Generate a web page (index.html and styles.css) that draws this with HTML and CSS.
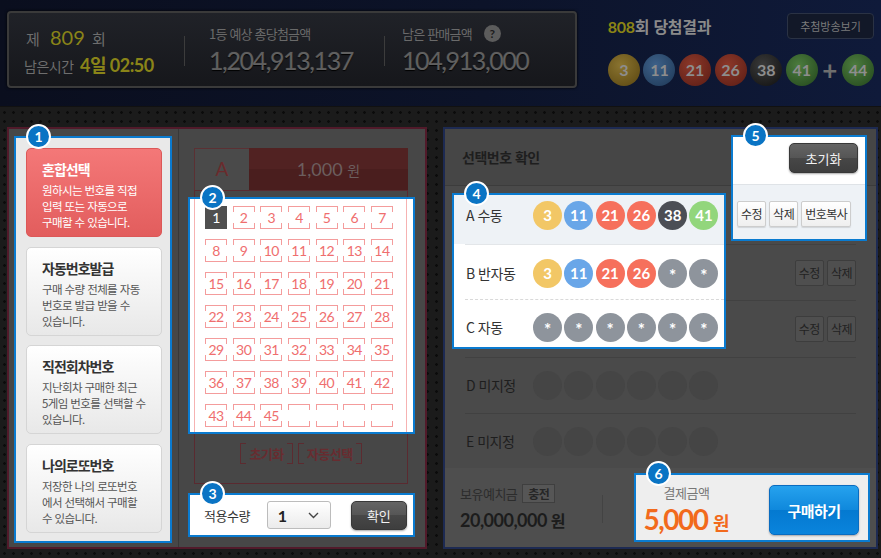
FILE: index.html
```html
<!DOCTYPE html>
<html lang="ko">
<head>
    <meta charset="UTF-8">
    <title>로또 6/45 구매</title>
    <link rel="stylesheet" href="styles.css">
</head>
<body>
    <div id="header">
        <div class="round-info">
            <div class="round-col">
                <div class="round-no">제 <b>809</b> 회</div>
                <div class="remain-time">남은시간 <b>4일 02:50</b></div>
            </div>
            <span class="info-divider"></span>
            <div class="money-col first">
                <div class="money-label">1등 예상 총당첨금액</div>
                <div class="money-num">1,204,913,137</div>
            </div>
            <span class="info-divider"></span>
            <div class="money-col second">
                <div class="money-label">남은 판매금액 <span class="help">?</span></div>
                <div class="money-num">104,913,000</div>
            </div>
        </div>
        <div class="last-result">
            <div class="result-head">
                <h2><em>808</em>회 당첨결과</h2>
                <a href="#" class="btn-broadcast">추첨방송보기</a>
            </div>
            <div class="result-balls">
                <span class="win-ball yellow">3</span>
                <span class="win-ball blue">11</span>
                <span class="win-ball red">21</span>
                <span class="win-ball red">26</span>
                <span class="win-ball black">38</span>
                <span class="win-ball green">41</span>
                <span class="plus">+</span>
                <span class="win-ball green">44</span>
            </div>
        </div>
    </div>

    <div id="main">
        <div class="buy-panel">
            <div class="type-col">
                <div class="hl type-list">
                    <span class="badge">1</span>
                    <div class="type-card active">
                        <h3>혼합선택</h3>
                        <p>원하시는 번호를 직접<br>입력 또는 자동으로<br>구매할 수 있습니다.</p>
                    </div>
                    <div class="type-card">
                        <h3>자동번호발급</h3>
                        <p>구매 수량 전체를 자동<br>번호로 발급 받을 수<br>있습니다.</p>
                    </div>
                    <div class="type-card">
                        <h3>직전회차번호</h3>
                        <p>지난회차 구매한 최근<br>5게임 번호를 선택할 수<br>있습니다.</p>
                    </div>
                    <div class="type-card">
                        <h3>나의로또번호</h3>
                        <p>저장한 나의 로또번호<br>에서 선택해서 구매할<br>수 있습니다.</p>
                    </div>
                </div>
            </div>

            <div class="ticket-col">
                <div class="ticket-head">
                    <span class="ticket-name">A</span>
                    <span class="ticket-price">1,000 <small>원</small></span>
                </div>
                <div class="ticket-body">
                    <div class="hl num-box">
                        <span class="badge">2</span>
                        <div class="num-grid">
                            <span class="num on">1</span><span class="num">2</span><span class="num">3</span><span class="num">4</span><span class="num">5</span><span class="num">6</span><span class="num">7</span>
                            <span class="num">8</span><span class="num">9</span><span class="num">10</span><span class="num">11</span><span class="num">12</span><span class="num">13</span><span class="num">14</span>
                            <span class="num">15</span><span class="num">16</span><span class="num">17</span><span class="num">18</span><span class="num">19</span><span class="num">20</span><span class="num">21</span>
                            <span class="num">22</span><span class="num">23</span><span class="num">24</span><span class="num">25</span><span class="num">26</span><span class="num">27</span><span class="num">28</span>
                            <span class="num">29</span><span class="num">30</span><span class="num">31</span><span class="num">32</span><span class="num">33</span><span class="num">34</span><span class="num">35</span>
                            <span class="num">36</span><span class="num">37</span><span class="num">38</span><span class="num">39</span><span class="num">40</span><span class="num">41</span><span class="num">42</span>
                            <span class="num">43</span><span class="num">44</span><span class="num">45</span><span class="num"></span><span class="num"></span><span class="num"></span><span class="num"></span>
                        </div>
                    </div>
                    <div class="ticket-btns">
                        <span class="bracket-btn">초기화</span>
                        <span class="bracket-btn">자동선택</span>
                    </div>
                </div>
                <div class="hl qty-box">
                    <span class="badge">3</span>
                    <span class="qty-label">적용수량</span>
                    <div class="qty-select">
                        1
                        <svg width="11" height="7" viewBox="0 0 11 7"><polyline points="1,1 5.5,5.5 10,1" fill="none" stroke="#444" stroke-width="1.4"/></svg>
                    </div>
                    <button class="btn-dark btn-ok">확인</button>
                </div>
            </div>
        </div>

        <div class="confirm-panel">
            <div class="confirm-head">선택번호 확인</div>

            <div class="pick-row row-b">
                <div class="row-btns"><span class="dim-btn">수정</span><span class="dim-btn">삭제</span></div>
            </div>
            <div class="pick-row row-c">
                <div class="row-btns"><span class="dim-btn">수정</span><span class="dim-btn">삭제</span></div>
            </div>
            <div class="pick-row row-d">
                <span class="row-label">D 미지정</span>
                <div class="balls">
                    <span class="ball empty"></span><span class="ball empty"></span><span class="ball empty"></span><span class="ball empty"></span><span class="ball empty"></span><span class="ball empty"></span>
                </div>
            </div>
            <div class="pick-row row-e">
                <span class="row-label">E 미지정</span>
                <div class="balls">
                    <span class="ball empty"></span><span class="ball empty"></span><span class="ball empty"></span><span class="ball empty"></span><span class="ball empty"></span><span class="ball empty"></span>
                </div>
            </div>

            <div class="hl pick-box">
                <span class="badge">4</span>
                <div class="pick-line line-a">
                    <span class="row-label">A 수동</span>
                    <div class="balls">
                        <span class="ball yellow">3</span><span class="ball blue">11</span><span class="ball red">21</span><span class="ball red">26</span><span class="ball dark">38</span><span class="ball green">41</span>
                    </div>
                </div>
                <div class="pick-line line-b">
                    <span class="row-label">B 반자동</span>
                    <div class="balls">
                        <span class="ball yellow">3</span><span class="ball blue">11</span><span class="ball red">21</span><span class="ball red">26</span><span class="ball gray">*</span><span class="ball gray">*</span>
                    </div>
                </div>
                <div class="pick-line line-c">
                    <span class="row-label">C 자동</span>
                    <div class="balls">
                        <span class="ball gray">*</span><span class="ball gray">*</span><span class="ball gray">*</span><span class="ball gray">*</span><span class="ball gray">*</span><span class="ball gray">*</span>
                    </div>
                </div>
            </div>

            <div class="hl tool-box">
                <span class="badge">5</span>
                <div class="tool-top">
                    <button class="btn-dark btn-reset">초기화</button>
                </div>
                <div class="tool-bottom">
                    <span class="light-btn">수정</span>
                    <span class="light-btn">삭제</span>
                    <span class="light-btn">번호복사</span>
                </div>
            </div>

            <div class="pay-bar">
                <div class="deposit">
                    <div class="deposit-top">보유예치금 <span class="charge-btn">충전</span></div>
                    <div class="deposit-amt">20,000,000 <small>원</small></div>
                </div>
                <span class="pay-divider"></span>
                <div class="hl pay-box">
                    <span class="badge">6</span>
                    <div class="pay-sum">
                        <div class="pay-label">결제금액</div>
                        <div class="pay-amt">5,000 <small>원</small></div>
                    </div>
                    <button class="btn-buy">구매하기</button>
                </div>
            </div>
        </div>
    </div>
</body>
</html>
```

FILE: styles.css
```css
* {
    box-sizing: border-box;
}
body {
    margin: 0;
    width: 881px;
    height: 558px;
    overflow: hidden;
    background: #1b1b1b radial-gradient(circle, #0b0b0b 1px, transparent 1.6px) 0 0 / 9px 9px;
    font-family: "Noto Sans CJK KR", sans-serif;
    color: #333;
}

/* header */
#header {
    height: 107px;
    padding: 11px 7px 0;
    display: flex;
    background: linear-gradient(90deg, #0a0e1e 0%, #0c1329 55%, #0f1a3a 100%);
    border-bottom: 1px solid #111;
}
.round-info {
    width: 570px;
    height: 77px;
    display: flex;
    align-items: center;
    padding-left: 15px;
    border: 2px solid #3a3a3a;
    border-radius: 4px;
    background: linear-gradient(#202228, #16171b);
    box-shadow: 0 0 3px #000;
}
.round-col {
    width: 160px;
    padding-top: 5px;
    color: #6e6e6e;
}
.round-no {
    font-size: 15px;
    line-height: 24px;
    padding-left: 2px;
}
.round-no b {
    font-family: Lato, sans-serif;
    font-weight: normal;
    font-size: 20px;
    color: #8a8418;
    margin: 0 3px 0 6px;
}
.remain-time {
    font-size: 14px;
    line-height: 28px;
    letter-spacing: -0.5px;
}
.remain-time b {
    font-family: Lato, "Noto Sans CJK KR", sans-serif;
    font-size: 18px;
    color: #8a8418;
    margin-left: 3px;
}
.info-divider {
    width: 1px;
    height: 30px;
    background: #3c3c3c;
    margin-top: 2px;
}
.money-col.first {
    width: 199px;
    padding-left: 24px;
}
.money-col.second {
    padding-left: 17px;
}
.money-label {
    font-size: 13px;
    line-height: 18px;
    letter-spacing: -0.8px;
    color: #6a6a6a;
    display: flex;
    align-items: center;
}
.help {
    display: inline-block;
    width: 17px;
    height: 17px;
    border-radius: 50%;
    background: #5c5c5c;
    color: #1c1c1c;
    font: bold 12px/17px Lato, sans-serif;
    text-align: center;
    margin-left: 12px;
    letter-spacing: 0;
}
.money-num {
    margin-top: 2px;
    font-family: Lato, sans-serif;
    font-size: 25px;
    line-height: 30px;
    letter-spacing: -1.4px;
    color: #606060;
    text-shadow: 0 1px 1px #000, 0 0 1px #555;
}
.last-result {
    flex: 1;
    margin-left: 31px;
}
.result-head {
    height: 26px;
    margin-top: 2px;
    display: flex;
    align-items: center;
    justify-content: space-between;
}
.result-head h2 {
    margin: 0;
    font-size: 16px;
    color: #8a8a8a;
    letter-spacing: -0.3px;
}
.result-head em {
    font-style: normal;
    font-family: Lato, sans-serif;
    color: #8c8515;
}
.btn-broadcast {
    width: 87px;
    height: 26px;
    display: flex;
    align-items: center;
    justify-content: center;
    border: 1px solid #2a3244;
    border-radius: 4px;
    background: #121828;
    color: #7b7b7b;
    font-size: 11px;
    text-decoration: none;
}
.result-balls {
    display: flex;
    align-items: center;
    gap: 3.6px;
    margin-top: 15px;
}
.win-ball {
    width: 32px;
    height: 32px;
    border-radius: 50%;
    font: bold 16px/32px Lato, sans-serif;
    color: #8d8d8d;
    text-align: center;
}
.win-ball.yellow { background: radial-gradient(circle at 40% 35%, #8a7430, #5a4610); }
.win-ball.blue { background: radial-gradient(circle at 40% 35%, #3e6189, #1d3755); }
.win-ball.red { background: radial-gradient(circle at 40% 35%, #8c3829, #5a1c14); }
.win-ball.black { background: radial-gradient(circle at 40% 35%, #3a3a3a, #0f0f0f); }
.win-ball.green { background: radial-gradient(circle at 40% 35%, #4c7c3e, #22461b); }
.plus {
    width: 17px;
    text-align: center;
    font: bold 26px/32px Lato, sans-serif;
    color: #6e6e6e;
}

/* main */
#main {
    display: flex;
    gap: 16px;
    padding: 20px 0 0 7px;
}
.hl {
    position: relative;
    border: 2px solid #0a7bd0;
}
.badge {
    position: absolute;
    left: 10px;
    top: -14px;
    width: 25px;
    height: 25px;
    border-radius: 50%;
    border: 2px solid #fff;
    background: #0a74c4;
    color: #fff;
    font: bold 14px/21px Lato, sans-serif;
    text-align: center;
    z-index: 2;
}

.buy-panel {
    width: 420px;
    height: 422px;
    border: 2px solid #511a2a;
    background: #474747;
    display: flex;
}
.type-col {
    width: 170px;
    padding: 7px 6px 4px 5px;
    border-right: 1px solid #383838;
    display: flex;
}
.type-list {
    flex: 1;
    background: #e9e9e9;
    padding: 10px 8px 0 10px;
    display: flex;
    flex-direction: column;
    gap: 9.5px;
}
.type-card {
    height: 89px;
    border: 1px solid #d5d5d5;
    border-radius: 5px;
    background: linear-gradient(#fff, #e8e8e8);
    padding: 10px 2px 0 15px;
}
.type-card h3 {
    margin: 0;
    font-size: 14px;
    line-height: 20px;
    letter-spacing: -1px;
    color: #333;
}
.type-card p {
    margin: 3px 0 0;
    font-size: 11.5px;
    line-height: 16px;
    letter-spacing: -0.6px;
    color: #555;
    white-space: nowrap;
}
.type-card.active {
    background: linear-gradient(#f47878, #e25d5d);
    border-color: #dc5858;
}
.type-card.active h3,
.type-card.active p {
    color: #fff;
}

.ticket-col {
    flex: 1;
    padding: 19px 0 0 15px;
}
.ticket-head {
    width: 214px;
    height: 42px;
    display: flex;
}
.ticket-name {
    width: 55px;
    border: 1px solid #5b3033;
    border-right: none;
    border-bottom: none;
    background: #4a4a4a;
    font: 19px/40px Lato, sans-serif;
    color: #6a2a2c;
    text-align: center;
}
.ticket-price {
    flex: 1;
    background: linear-gradient(#512222 50%, #4a1e1e 50%);
    font: 18px/42px Lato, sans-serif;
    color: #6c5e5e;
    text-align: center;
}
.ticket-price small {
    font-family: "Noto Sans CJK KR", sans-serif;
    font-size: 14px;
}
.ticket-body {
    width: 214px;
    height: 294px;
    border: 1px solid #5a2a30;
}
.num-box {
    margin: 6px -8px 0 -7px;
    height: 237px;
    background: #fff;
}
.num-grid {
    height: 100%;
    margin: 0 6px 0 4px;
    border-left: 1px solid #f6b2b2;
    border-right: 1px solid #f6b2b2;
    padding: 7px 0 0 10px;
    display: grid;
    grid-template-columns: repeat(7, 22px);
    grid-auto-rows: 23px;
    column-gap: 5.67px;
    row-gap: 10px;
}
.num {
    position: relative;
    z-index: 0;
    border: 1px solid #f49c9c;
    color: #ef6e6e;
    font: 14px/21px Lato, sans-serif;
    letter-spacing: -0.5px;
    text-align: center;
}
.num::before {
    content: "";
    position: absolute;
    z-index: -1;
    left: -1px;
    right: -1px;
    top: 5px;
    bottom: 5px;
    background: #fff;
}
.num.on {
    background: #4f4f4f;
    border-color: #4f4f4f;
    color: #fff;
}
.num.on::before {
    display: none;
}
.ticket-btns {
    display: flex;
    justify-content: center;
    gap: 5px;
    margin-top: 9px;
}
.bracket-btn {
    height: 21px;
    padding: 0 8px;
    border-left: 1px solid #5c2b30;
    border-right: 1px solid #5c2b30;
    background:
        linear-gradient(#5c2b30, #5c2b30) left top / 5px 1px no-repeat,
        linear-gradient(#5c2b30, #5c2b30) right top / 5px 1px no-repeat,
        linear-gradient(#5c2b30, #5c2b30) left bottom / 5px 1px no-repeat,
        linear-gradient(#5c2b30, #5c2b30) right bottom / 5px 1px no-repeat;
    font-size: 13px;
    line-height: 21px;
    font-weight: bold;
    letter-spacing: -0.5px;
    color: #682c30;
}
.qty-box {
    width: 227px;
    height: 44px;
    margin: 9px 0 0 -6px;
    background: #fff;
    display: flex;
    align-items: center;
    padding-left: 14px;
}
.qty-label {
    font-size: 13px;
    letter-spacing: -0.5px;
    color: #333;
    margin-right: 17px;
}
.qty-select {
    width: 64px;
    height: 28px;
    border: 1px solid #bcbcbc;
    border-radius: 3px;
    background: linear-gradient(#fff, #ebebeb);
    display: flex;
    align-items: center;
    justify-content: space-between;
    padding: 0 11px 0 10px;
    font: bold 16px Lato, sans-serif;
    color: #222;
}
.btn-dark {
    border: 1px solid #383838;
    border-radius: 5px;
    background: linear-gradient(#646464, #555 50%, #474747 50%, #3e3e3e);
    color: #f2f2f2;
    font-family: "Noto Sans CJK KR", sans-serif;
    font-size: 13px;
    padding: 0;
    box-shadow: 0 1px 2px rgba(0, 0, 0, 0.35);
}
.btn-ok {
    width: 56px;
    height: 29px;
    margin-left: 20px;
}

/* confirm panel */
.confirm-panel {
    width: 435px;
    height: 422px;
    border: 2px solid #1d2a52;
    background: #4a4a4a;
    display: grid;
    grid-template-columns: 7px 274px 5px 136px 9px;
    grid-template-rows: 57px 58px 56px 57px 56px 55px 79px;
}
.confirm-head {
    grid-column: 1 / -1;
    grid-row: 1;
    padding-left: 17px;
    line-height: 56px;
    border-bottom: 1px solid #3c3c3c;
    background: #464646;
    font-size: 14px;
    font-weight: bold;
    letter-spacing: -0.5px;
    color: #1e1e1e;
}
.pick-row {
    grid-column: 1 / -1;
    margin: 0 20px;
    border-top: 1px solid #414141;
    display: flex;
    align-items: center;
    padding-left: 1px;
}
.row-b { grid-row: 3; }
.row-c { grid-row: 4; }
.row-d { grid-row: 5; }
.row-e { grid-row: 6; }
.row-btns {
    margin-left: auto;
    display: flex;
    gap: 3px;
}
.dim-btn {
    height: 26px;
    padding: 0 3px;
    border: 1px solid #3d3d3d;
    border-radius: 2px;
    background: #4f4f4f;
    font-size: 12px;
    line-height: 24px;
    letter-spacing: -0.5px;
    color: #222;
}
.row-label {
    width: 67px;
    font-size: 14px;
    letter-spacing: -0.5px;
    color: #1e1e1e;
    line-height: 29px;
}
.balls {
    display: flex;
    gap: 2.3px;
}
.ball {
    width: 29px;
    height: 29px;
    border-radius: 50%;
    font: bold 15px/29px Lato, sans-serif;
    color: #fff;
    text-align: center;
}
.ball.empty { background: #454545; }
.ball.yellow { background: #f2c766; }
.ball.blue { background: #69a6e8; }
.ball.red { background: #f6705c; }
.ball.dark { background: #4b4e55; }
.ball.green { background: #92d67c; }
.ball.gray { background: #8e949c; font-size: 17px; line-height: 33px; }

.pick-box {
    grid-column: 2;
    grid-row: 2 / 5;
    margin: 7px 0 8px;
    background: #fff;
    display: flex;
    flex-direction: column;
}
.pick-box .row-label {
    color: #333;
}
.pick-line {
    display: flex;
    align-items: flex-start;
}
.line-a {
    height: 49px;
    background: #eef2f6;
    padding: 6px 0 0 12px;
}
.line-b {
    height: 56px;
    margin-left: 11px;
    padding: 14px 0 0 1px;
    border-top: 1px solid #e3e6e9;
    border-bottom: 1px dashed #d9d9d9;
}
.line-c {
    flex: 1;
    margin-left: 11px;
    padding: 13px 0 0 1px;
}

.tool-box {
    grid-column: 4;
    grid-row: 1 / 3;
    margin: 6px 0 3px;
    background: #fff;
    display: flex;
    flex-direction: column;
}
.tool-top {
    height: 48px;
    border-bottom: 1px solid #dfe3e7;
    display: flex;
    justify-content: flex-end;
    padding: 6px 7px 0 0;
}
.btn-reset {
    width: 69px;
    height: 30px;
}
.tool-bottom {
    flex: 1;
    background: #eef2f6;
    display: flex;
    gap: 3px;
    padding: 16px 0 0 4px;
}
.light-btn {
    height: 26px;
    padding: 0 3px;
    border: 1px solid #cdcdcd;
    border-radius: 2px;
    background: linear-gradient(#fff, #efefef);
    box-shadow: 0 1px 1px rgba(0, 0, 0, 0.12);
    font-size: 12px;
    line-height: 24px;
    letter-spacing: -0.5px;
    color: #333;
}

.pay-bar {
    grid-column: 1 / -1;
    grid-row: 7;
    display: flex;
    align-items: flex-start;
    background: #4e4e4e;
    padding-left: 15px;
}
.deposit {
    width: 142px;
    padding-top: 16px;
}
.deposit-top {
    display: flex;
    align-items: center;
    gap: 5px;
    height: 19px;
    font-size: 13px;
    letter-spacing: -0.5px;
    color: #2c2c2c;
}
.charge-btn {
    width: 33px;
    height: 19px;
    border: 1px solid #3f3f3f;
    background: #565656;
    font-size: 12px;
    font-weight: bold;
    line-height: 17px;
    text-align: center;
    color: #262626;
}
.deposit-amt {
    margin-top: 5px;
    font: bold 18px/24px Lato, sans-serif;
    letter-spacing: -0.5px;
    color: #1c1c1c;
}
.deposit-amt small {
    font-family: "Noto Sans CJK KR", sans-serif;
    font-size: 16px;
}
.pay-divider {
    width: 1px;
    height: 28px;
    margin-top: 27px;
    background: #434343;
}
.pay-box {
    width: 236px;
    height: 69px;
    margin: 5px 6px 0 auto;
    background: #eee;
    display: flex;
    align-items: flex-start;
    padding: 0 9px 0 7px;
}
.pay-sum {
    width: 87px;
    margin-top: 9px;
    text-align: center;
}
.pay-label {
    font-size: 13px;
    line-height: 18px;
    letter-spacing: -0.5px;
    color: #777;
}
.pay-amt {
    font: bold 28px/34px Lato, sans-serif;
    letter-spacing: -1.5px;
    color: #f26a1c;
    white-space: nowrap;
}
.pay-amt small {
    font-family: "Noto Sans CJK KR", sans-serif;
    font-size: 18px;
    letter-spacing: 0;
}
.btn-buy {
    margin: 10px 0 0 auto;
    width: 90px;
    height: 50px;
    border: 1px solid #0a6cc0;
    border-radius: 5px;
    background: linear-gradient(#26a2ee, #0f88dc 50%, #0479d0 50%, #0a84dc);
    box-shadow: 0 1px 2px rgba(0, 0, 0, 0.3);
    color: #fff;
    font-family: "Noto Sans CJK KR", sans-serif;
    font-size: 15px;
    font-weight: bold;
    letter-spacing: -0.5px;
    padding: 0;
}
```
